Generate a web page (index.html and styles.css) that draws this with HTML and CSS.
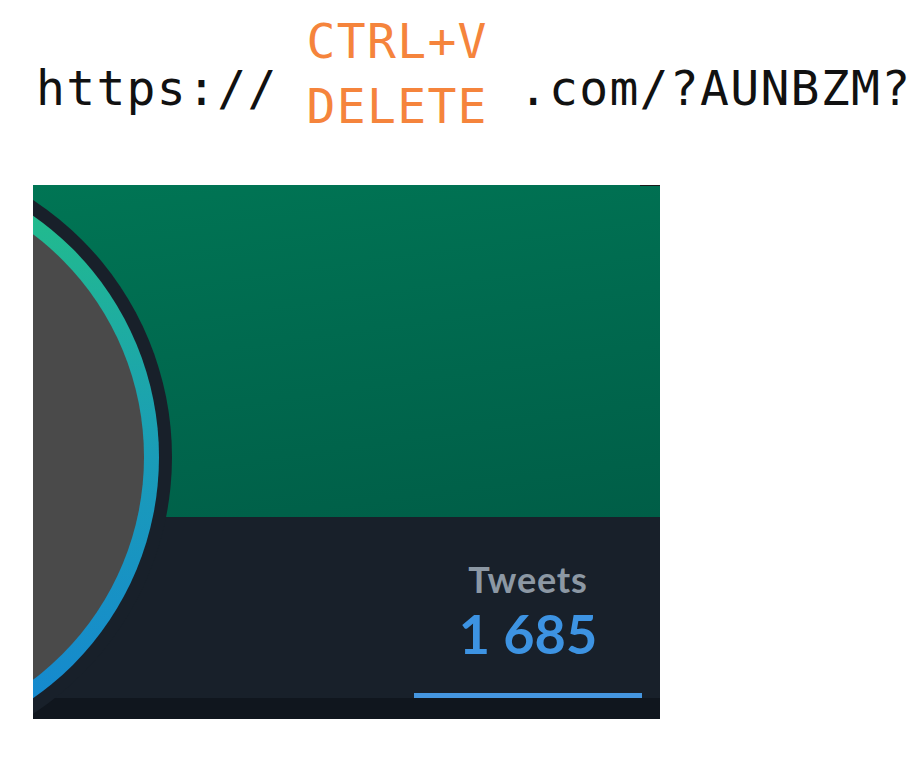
FILE: index.html
```html
<!DOCTYPE html>
<html>
<head>
<meta charset="utf-8">
<link rel="stylesheet" href="styles.css">
</head>
<body>
<div class="url">
  <span class="url-part url-prefix">https://</span>
  <span class="keys">
    <span class="key">CTRL+V</span>
    <span class="key">DELETE</span>
  </span>
  <span class="url-part url-suffix">.com/?AUNBZM?</span>
</div>
<div class="card">
  <div class="cover"></div>
  <div class="bar">
    <div class="tab">
      <div class="tab-label">Tweets</div>
      <div class="tab-value">1 685</div>
      <div class="tab-line"></div>
    </div>
  </div>
  <div class="strip"></div>
  <div class="avatar">
    <div class="avatar-ring">
      <div class="avatar-img"></div>
    </div>
  </div>
  <div class="corner-mark"></div>
</div>
</body>
</html>
```
FILE: styles.css
```css
html, body {
  margin: 0;
  padding: 0;
  background: #ffffff;
}
.url {
  display: flex;
  align-items: flex-start;
  padding: 9px 0 0 36px;
  font-family: "DejaVu Sans Mono", monospace;
  font-size: 48px;
  letter-spacing: 1.3px;
  line-height: 65px;
  white-space: pre;
}
.url-part {
  color: #111111;
  margin-top: 47px;
}
.keys {
  display: flex;
  flex-direction: column;
  color: #f5843c;
  margin-left: 29px;
  margin-right: 31px;
}
.card {
  position: relative;
  margin: 46px 0 0 33px;
  width: 627px;
  height: 534px;
  overflow: hidden;
  display: flex;
  flex-direction: column;
  background: #18202a;
}
.cover {
  height: 332px;
  background: linear-gradient(172deg, #007554 0%, #006a4f 45%, #005e47 100%);
}
.bar {
  height: 181px;
  background: #18202a;
  display: flex;
  justify-content: flex-end;
  padding-right: 18px;
}
.tab {
  width: 228px;
  display: flex;
  flex-direction: column;
  align-items: center;
  font-family: Lato, sans-serif;
  font-weight: 700;
  line-height: normal;
}
.tab-label {
  margin-top: 40px;
  font-size: 36px;
  letter-spacing: 0.8px;
  color: #8c98a4;
}
.tab-value {
  font-size: 54px;
  color: #3d93e2;
}
.tab-line {
  margin-top: auto;
  width: 228px;
  height: 5px;
  background: #4596e0;
}
.strip {
  flex: 1;
  background: #10161e;
}
.avatar {
  position: absolute;
  left: -475px;
  top: -35px;
  width: 614px;
  height: 614px;
  border-radius: 50%;
  background: #18202a;
  display: flex;
  align-items: center;
  justify-content: center;
}
.avatar-ring {
  width: 588px;
  height: 588px;
  border-radius: 50%;
  background: linear-gradient(180deg, #22bd8a 6%, #1a9cb8 50%, #1588d0 94%);
  display: flex;
  align-items: center;
  justify-content: center;
}
.avatar-img {
  width: 558px;
  height: 558px;
  border-radius: 50%;
  background: #4a4a4a;
}
.corner-mark {
  position: absolute;
  top: 0;
  right: 0;
  width: 20px;
  height: 1px;
  background: #1a1a1a;
}
```
